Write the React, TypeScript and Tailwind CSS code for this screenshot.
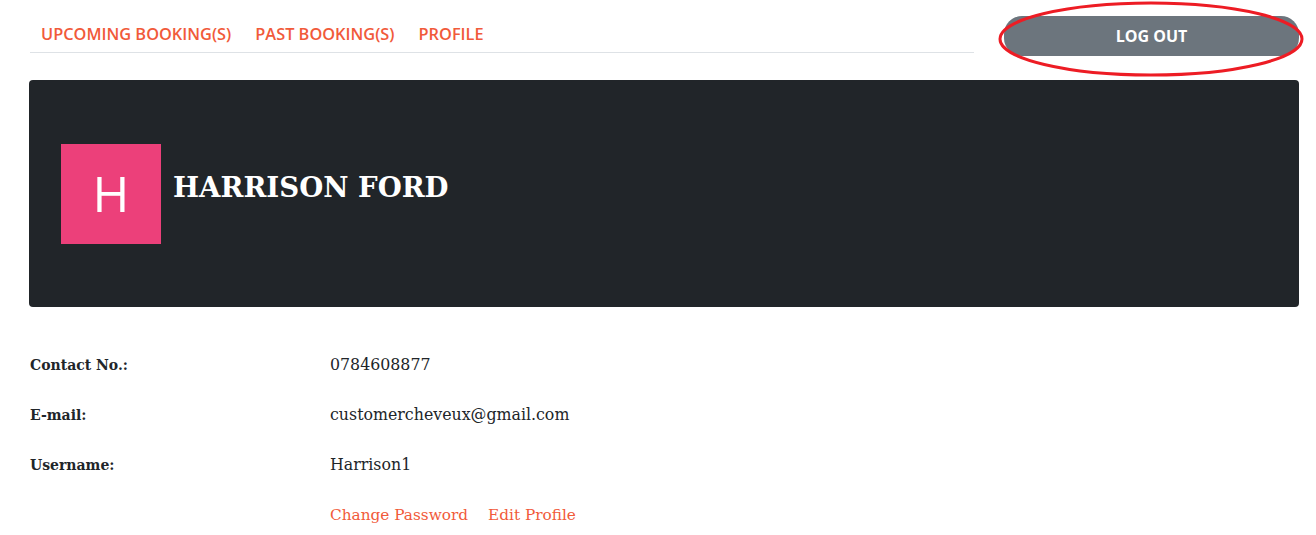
import React from "react";

export default function App() {
  const serif = { fontFamily: '"DejaVu Serif", "Liberation Serif", serif' };
  return (
    <div className="relative w-[1316px] h-[535px] overflow-hidden bg-white">
      <div className="pl-[30px] pr-[17px]">
        <div className="flex items-start gap-[30px] pt-[16px]">
          <div className="flex-1 border-b border-[#dee2e6] h-[37px] flex items-center" style={{ fontFamily: '"Open Sans", sans-serif' }}>
            <nav className="flex gap-[24px] pl-[11px] text-[16.35px] font-semibold text-[#f15a3a] uppercase leading-none">
              <span>Upcoming Booking(s)</span>
              <span>Past Booking(s)</span>
              <span>Profile</span>
            </nav>
          </div>
          <button
            className="w-[295px] h-[40px] rounded-[18px] bg-[#6c757d] text-white font-bold text-[16px] flex items-center justify-center"
            style={{ fontFamily: '"Open Sans", sans-serif' }}
          >
            LOG OUT
          </button>
        </div>

        <div className="mt-[24px] -ml-px bg-[#212529] rounded-[4px] h-[227px] flex items-center pl-[32px]">
          <div className="w-[100px] h-[100px] bg-[#ec407a] flex items-center justify-center text-white text-[50px] font-normal" style={{ fontFamily: '"Open Sans", sans-serif' }}>
            H
          </div>
          <h1 className="ml-[12px] text-white font-bold text-[27.6px] -mt-[12px]" style={serif}>
            HARRISON FORD
          </h1>
        </div>

        <div className="mt-[33px] text-[15.8px] text-[#212529]" style={serif}>
          <div className="grid grid-cols-[300px_1fr]">
            <div className="h-[50px] flex items-center font-bold text-[14px]">Contact No.:</div>
            <div className="h-[50px] flex items-center">0784608877</div>
            <div className="h-[50px] flex items-center font-bold text-[14px]">E-mail:</div>
            <div className="h-[50px] flex items-center">customercheveux@gmail.com</div>
            <div className="h-[50px] flex items-center font-bold text-[14px]">Username:</div>
            <div className="h-[50px] flex items-center">Harrison1</div>
            <div className="h-[50px]" />
            <div className="h-[50px] flex items-center gap-[20px] text-[15.3px] text-[#f15a3a]">
              <span>Change Password</span>
              <span>Edit Profile</span>
            </div>
          </div>
        </div>
      </div>

      <svg className="absolute left-[996px] top-0 pointer-events-none" width="312" height="80" viewBox="0 0 312 80">
        <ellipse cx="155" cy="39" rx="151" ry="36" fill="none" stroke="#ed1c24" strokeWidth="3" />
      </svg>
    </div>
  );
}
